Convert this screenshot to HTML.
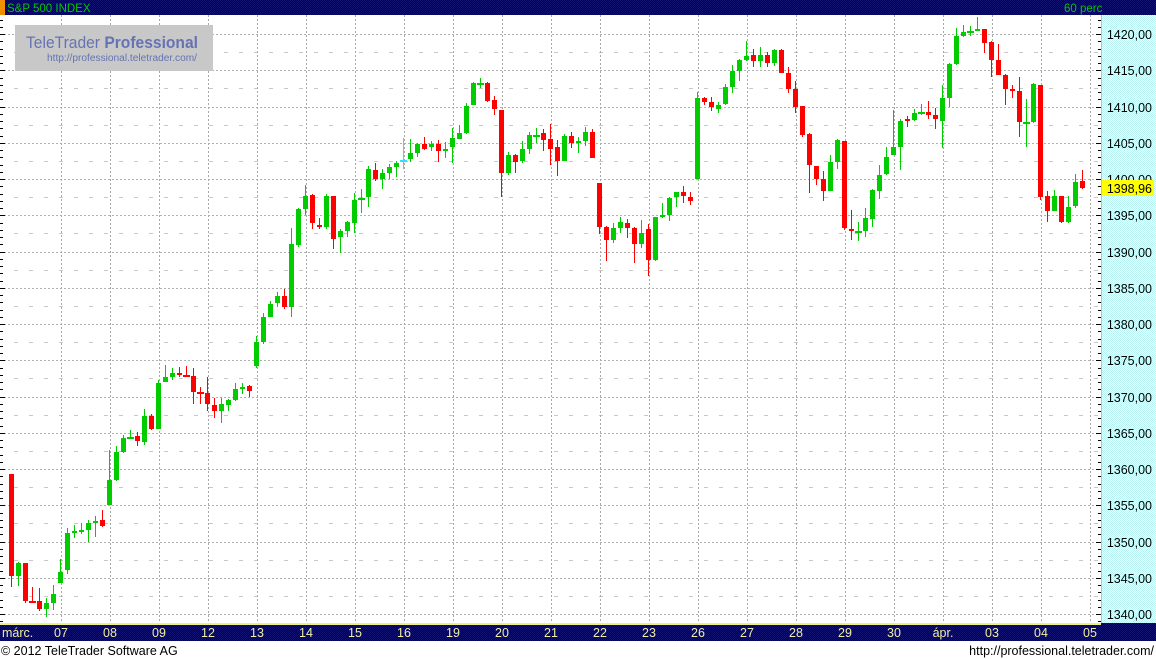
<!DOCTYPE html>
<html><head><meta charset="utf-8"><style>
html,body{margin:0;padding:0;background:#fff;width:1156px;height:659px;overflow:hidden;font-family:"Liberation Sans",sans-serif}
svg{display:block}
</style></head><body>
<svg id="s" width="1156" height="659" xmlns="http://www.w3.org/2000/svg" font-family="Liberation Sans, sans-serif">
<defs>
<pattern id="nav" width="2" height="2" patternUnits="userSpaceOnUse"><rect width="2" height="2" fill="#000058"/><rect width="1" height="1" fill="#10106e"/><rect x="1" y="1" width="1" height="1" fill="#10106e"/></pattern>
<pattern id="cy" width="2" height="2" patternUnits="userSpaceOnUse"><rect width="2" height="2" fill="#ffffff"/><rect width="1" height="1" fill="#b8f4f4"/><rect x="1" y="1" width="1" height="1" fill="#b8f4f4"/></pattern>
</defs>
<rect x="0" y="0" width="1156" height="15" fill="url(#nav)"/>
<rect x="0" y="0" width="5" height="15" fill="#f09000"/>
<text x="7" y="12" font-size="11.5" fill="#00c800">S&amp;P 500 INDEX</text>
<text x="1064" y="12" font-size="11.5" fill="#00c800">60 perc</text>
<rect x="1101" y="15" width="55" height="608" fill="url(#cy)"/>
<line x1="1101.5" y1="15" x2="1101.5" y2="623" stroke="#d8c070"/>
<g id="grid"></g>
<rect x="15" y="25" width="198" height="46" fill="#c8c8c8"/>
<text x="26" y="48" font-size="17" fill="#6673b3" textLength="172" lengthAdjust="spacingAndGlyphs">TeleTrader <tspan font-weight="bold">Professional</tspan></text>
<text x="47" y="61" font-size="10" fill="#6673b3" textLength="150" lengthAdjust="spacingAndGlyphs">http://professional.teletrader.com/</text>
<g id="c"></g>
<g font-size="12.5" fill="#000" text-anchor="end">
<text x="1152" y="39">1420,00</text><text x="1152" y="75">1415,00</text><text x="1152" y="112">1410,00</text><text x="1152" y="148">1405,00</text><text x="1152" y="184">1400,00</text><text x="1152" y="220">1395,00</text><text x="1152" y="257">1390,00</text><text x="1152" y="293">1385,00</text><text x="1152" y="329">1380,00</text><text x="1152" y="365">1375,00</text><text x="1152" y="402">1370,00</text><text x="1152" y="438">1365,00</text><text x="1152" y="474">1360,00</text><text x="1152" y="510">1355,00</text><text x="1152" y="547">1350,00</text><text x="1152" y="583">1345,00</text><text x="1152" y="619">1340,00</text>
</g>
<rect x="1102" y="180" width="52" height="16" fill="#ffff00"/>
<text x="1152" y="193" font-size="12.5" text-anchor="end" fill="#000">1398,96</text>
<rect x="0" y="623" width="1156" height="18" fill="url(#nav)"/>
<rect x="0" y="623" width="1101" height="2" fill="#f0f080"/>
<g font-size="12.5" fill="#f0f0a0" text-anchor="middle">
<text x="2" y="637" text-anchor="start">márc.</text>
<text x="61" y="637">07</text><text x="110" y="637">08</text><text x="159" y="637">09</text><text x="208" y="637">12</text><text x="257" y="637">13</text><text x="306" y="637">14</text><text x="355" y="637">15</text><text x="404" y="637">16</text><text x="453" y="637">19</text><text x="502" y="637">20</text><text x="551" y="637">21</text><text x="600" y="637">22</text><text x="649" y="637">23</text><text x="698" y="637">26</text><text x="747" y="637">27</text><text x="796" y="637">28</text><text x="845" y="637">29</text><text x="894" y="637">30</text><text x="943" y="637">ápr.</text><text x="992" y="637">03</text><text x="1041" y="637">04</text><text x="1090" y="637">05</text>
</g>
<text x="1" y="655" font-size="12.5" fill="#000">© 2012 TeleTrader Software AG</text>
<text x="1154" y="655" font-size="12.5" fill="#000" text-anchor="end">http://professional.teletrader.com/</text>
</svg>
<script>
var NS="http://www.w3.org/2000/svg";
function el(p,t,a){var e=document.createElementNS(NS,t);for(var k in a)e.setAttribute(k,a[k]);p.appendChild(e);return e;}
var g=document.getElementById('grid');
for(var k=0;k<=16;k++){var y=34+36.25*k;var yy=Math.round(y)+0.5;
 el(g,'line',{x1:0,y1:yy,x2:1101,y2:yy,stroke:'#b0b0b0','stroke-dasharray':'2,2'});
 if(k<16){var y2=Math.round(y+18.1)+0.5;el(g,'line',{x1:14,y1:y2,x2:1101,y2:y2,stroke:'#c8c8c8','stroke-dasharray':'4,11'});}
}
for(var k=0;k<22;k++){var x=61+49*k+0.5;el(g,'line',{x1:x,y1:15,x2:x,y2:623,stroke:'#a8a8a8','stroke-dasharray':'2,2'});}
for(var p=-2;p<=82;p++){var y=Math.round(34+p*7.25)+0.5;if(y<16||y>622)continue;var m=(p%5==0);
 el(g,'line',{x1:0,y1:y,x2:m?5:3,y2:y,stroke:'#000'});
 el(g,'line',{x1:m?1096:1098,y1:y,x2:1101,y2:y,stroke:'#000'});}
var D=[[474,576,474,587,'r'],[563,576,562,586,'g'],[563,601,563,603,'r'],[601,602,587,603,'r'],[601,609,588,611,'r'],[603,609,598,617,'g'],[594,603,585,610,'g'],[572,583,559,583,'g'],[533,570,528,574,'g'],[531,533,525,538,'g'],
[530,532,523,534,'g'],[523,530,520,542,'g'],[521,523,516,537,'g'],[520,526,510,527,'r'],[480,505,450,505,'g'],[452,480,446,481,'g'],[438,452,435,453,'g'],[437,438,430,439,'g'],[436,441,432,446,'r'],[416,442,409,445,'g'],
[416,429,414,430,'r'],[383,429,380,429,'g'],[377,382,365,382,'g'],[373,377,368,380,'g'],[373,375,367,377,'r'],[375,376,366,377,'r'],[376,392,368,404,'r'],[392,393,387,404,'r'],[393,404,377,411,'r'],[405,411,398,418,'r'],
[404,411,398,423,'g'],[400,405,399,411,'g'],[389,400,383,401,'g'],[387,389,383,394,'g'],[386,391,385,397,'r'],[342,366,336,368,'g'],[317,342,313,344,'g'],[304,317,301,317,'g'],[296,303,292,307,'g'],[296,307,289,309,'r'],
[244,307,228,317,'g'],[209,245,208,247,'g'],[196,209,185,215,'g'],[195,223,194,229,'r'],[225,227,218,229,'r'],[196,227,194,229,'g'],[196,239,196,249,'r'],[231,237,229,253,'g'],[222,231,221,237,'g'],[200,223,193,233,'g'],
[198,199,189,213,'g'],[169,197,166,207,'g'],[170,179,163,181,'r'],[173,179,169,189,'g'],[167,173,164,179,'g'],[163,167,161,177,'g'],[160,161,138,169,'c'],[153,159,139,162,'g'],[144,153,143,157,'g'],[144,149,137,150,'r'],
[144,147,141,151,'g'],[144,151,140,162,'r'],[149,151,142,158,'g'],[138,147,128,163,'g'],[133,139,125,139,'g'],[106,133,103,134,'g'],[83,105,82,105,'g'],[83,84,78,88,'g'],[83,101,82,102,'r'],[100,109,96,115,'r'],
[110,173,110,197,'r'],[155,173,152,175,'g'],[155,162,154,173,'r'],[149,161,141,163,'g'],[135,149,132,154,'g'],[135,136,128,143,'g'],[133,140,129,151,'r'],[139,149,124,165,'r'],[147,161,140,176,'r'],[136,161,134,161,'g'],
[136,143,132,148,'r'],[141,143,137,153,'g'],[132,141,127,146,'g'],[132,158,129,158,'r'],[183,227,183,234,'r'],[227,240,226,261,'r'],[228,240,223,243,'g'],[222,228,217,233,'g'],[223,228,219,238,'r'],[228,244,227,263,'r'],
[233,244,220,248,'g'],[229,260,224,276,'r'],[217,260,217,261,'g'],[215,217,203,218,'g'],[198,215,197,221,'g'],[192,197,192,207,'g'],[192,196,186,203,'r'],[197,201,192,205,'r'],[98,179,92,179,'g'],[98,102,97,105,'r'],
[102,107,97,111,'r'],[105,109,102,113,'g'],[87,104,84,105,'g'],[71,87,65,93,'g'],[60,71,59,81,'g'],[56,60,41,61,'g'],[55,61,49,67,'r'],[55,61,47,67,'g'],[55,63,52,67,'r'],[50,63,49,66,'g'],
[50,73,49,73,'r'],[73,89,67,93,'r'],[89,107,81,113,'r'],[106,135,106,137,'r'],[134,165,133,193,'r'],[166,179,166,185,'r'],[179,191,171,201,'r'],[162,191,155,191,'g'],[140,162,139,169,'g'],[141,228,141,230,'r'],
[229,231,210,240,'r'],[231,232,222,241,'g'],[218,231,208,237,'g'],[190,219,189,227,'g'],[175,191,165,199,'g'],[157,174,147,175,'g'],[147,155,110,155,'g'],[121,147,119,170,'g'],[119,121,116,127,'r'],[113,120,109,121,'g'],
[112,113,104,115,'g'],[112,115,101,119,'r'],[115,119,108,129,'r'],[98,121,85,148,'g'],[64,98,63,107,'g'],[36,64,28,65,'g'],[32,36,25,37,'g'],[31,32,26,36,'g'],[29,31,17,31,'g'],[29,43,29,53,'r'],
[42,60,41,77,'r'],[60,75,44,75,'r'],[75,89,74,105,'r'],[89,91,85,98,'r'],[91,122,77,137,'r'],[122,123,99,147,'g'],[84,122,83,123,'g'],[85,197,85,200,'r'],[196,211,191,222,'r'],[196,211,190,211,'g'],
[196,222,196,223,'r'],[207,222,196,223,'g'],[182,206,174,208,'g'],[181,188,170,189,'r']];
var C={g:'#00cc00',r:'#ff0000',c:'#33ddff'};
var cg=document.getElementById('c');
D.forEach(function(d,i){var x=11+7*i;var col=C[d[4]];
 el(cg,'rect',{x:x,y:d[2],width:1,height:Math.max(1,d[3]-d[2]),fill:col});
 var h=d[1]-d[0];if(h<2){el(cg,'rect',{x:x-3,y:d[0],width:7,height:2,fill:col});}
 else el(cg,'rect',{x:x-2,y:d[0],width:5,height:h,fill:col});
});
</script>
</body></html>
